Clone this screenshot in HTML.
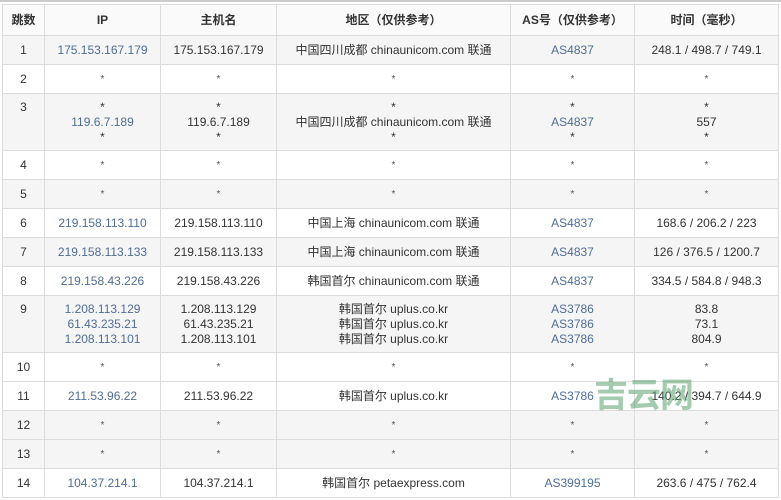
<!DOCTYPE html>
<html><head><meta charset="utf-8"><style>
body{margin:0;background:#fff;width:781px;height:500px;overflow:hidden;position:relative;font-family:"Liberation Sans","Noto Sans CJK SC",sans-serif;font-size:12px;color:#333}
.top{position:absolute;left:0;top:0;width:781px;height:2px;background:#ccc}
table{position:absolute;left:2px;top:4px;border-collapse:collapse;table-layout:fixed}
td,th{border:1px solid #dcdcdc;text-align:center;padding:0;line-height:15px}
th{font-weight:bold;height:30px;background:#fafafa}
tr.o td{background:#f5f5f5}
td{height:28px}
tr.t td{height:56px}
tr.t td.n{vertical-align:top;padding-top:6px;height:50px}
a{color:#4f6d97;text-decoration:none}
.s{font-size:10px;color:#555}
.wm{position:absolute;left:594px;top:368px;font-size:34px;font-weight:bold;color:rgba(90,160,110,0.55);letter-spacing:-1px;font-family:"Noto Sans CJK SC",sans-serif}
</style></head><body>
<div class="top"></div>
<table>
<colgroup><col style="width:42px"><col style="width:116px"><col style="width:116px"><col style="width:234px"><col style="width:124px"><col style="width:144px"></colgroup>
<tr><th>跳数</th><th>IP</th><th>主机名</th><th>地区（仅供参考）</th><th>AS号（仅供参考）</th><th>时间（毫秒）</th></tr>
<tr class="o"><td>1</td><td><a>175.153.167.179</a></td><td>175.153.167.179</td><td>中国四川成都 chinaunicom.com 联通</td><td><a>AS4837</a></td><td>248.1 / 498.7 / 749.1</td></tr>
<tr><td>2</td><td class="s">*</td><td class="s">*</td><td class="s">*</td><td class="s">*</td><td class="s">*</td></tr>
<tr class="o t"><td class="n">3</td><td>*<br><a>119.6.7.189</a><br>*</td><td>*<br>119.6.7.189<br>*</td><td>*<br>中国四川成都 chinaunicom.com 联通<br>*</td><td>*<br><a>AS4837</a><br>*</td><td>*<br>557<br>*</td></tr>
<tr><td>4</td><td class="s">*</td><td class="s">*</td><td class="s">*</td><td class="s">*</td><td class="s">*</td></tr>
<tr class="o"><td>5</td><td class="s">*</td><td class="s">*</td><td class="s">*</td><td class="s">*</td><td class="s">*</td></tr>
<tr><td>6</td><td><a>219.158.113.110</a></td><td>219.158.113.110</td><td>中国上海 chinaunicom.com 联通</td><td><a>AS4837</a></td><td>168.6 / 206.2 / 223</td></tr>
<tr class="o"><td>7</td><td><a>219.158.113.133</a></td><td>219.158.113.133</td><td>中国上海 chinaunicom.com 联通</td><td><a>AS4837</a></td><td>126 / 376.5 / 1200.7</td></tr>
<tr><td>8</td><td><a>219.158.43.226</a></td><td>219.158.43.226</td><td>韩国首尔 chinaunicom.com 联通</td><td><a>AS4837</a></td><td>334.5 / 584.8 / 948.3</td></tr>
<tr class="o t"><td class="n">9</td><td><a>1.208.113.129</a><br><a>61.43.235.21</a><br><a>1.208.113.101</a></td><td>1.208.113.129<br>61.43.235.21<br>1.208.113.101</td><td>韩国首尔 uplus.co.kr<br>韩国首尔 uplus.co.kr<br>韩国首尔 uplus.co.kr</td><td><a>AS3786</a><br><a>AS3786</a><br><a>AS3786</a></td><td>83.8<br>73.1<br>804.9</td></tr>
<tr><td>10</td><td class="s">*</td><td class="s">*</td><td class="s">*</td><td class="s">*</td><td class="s">*</td></tr>
<tr><td>11</td><td><a>211.53.96.22</a></td><td>211.53.96.22</td><td>韩国首尔 uplus.co.kr</td><td><a>AS3786</a></td><td>140.2 / 394.7 / 644.9</td></tr>
<tr class="o"><td>12</td><td class="s">*</td><td class="s">*</td><td class="s">*</td><td class="s">*</td><td class="s">*</td></tr>
<tr class="o"><td>13</td><td class="s">*</td><td class="s">*</td><td class="s">*</td><td class="s">*</td><td class="s">*</td></tr>
<tr><td>14</td><td><a>104.37.214.1</a></td><td>104.37.214.1</td><td>韩国首尔 petaexpress.com</td><td><a>AS399195</a></td><td>263.6 / 475 / 762.4</td></tr>
</table>
<div class="wm">吉云网</div>
</body></html>
